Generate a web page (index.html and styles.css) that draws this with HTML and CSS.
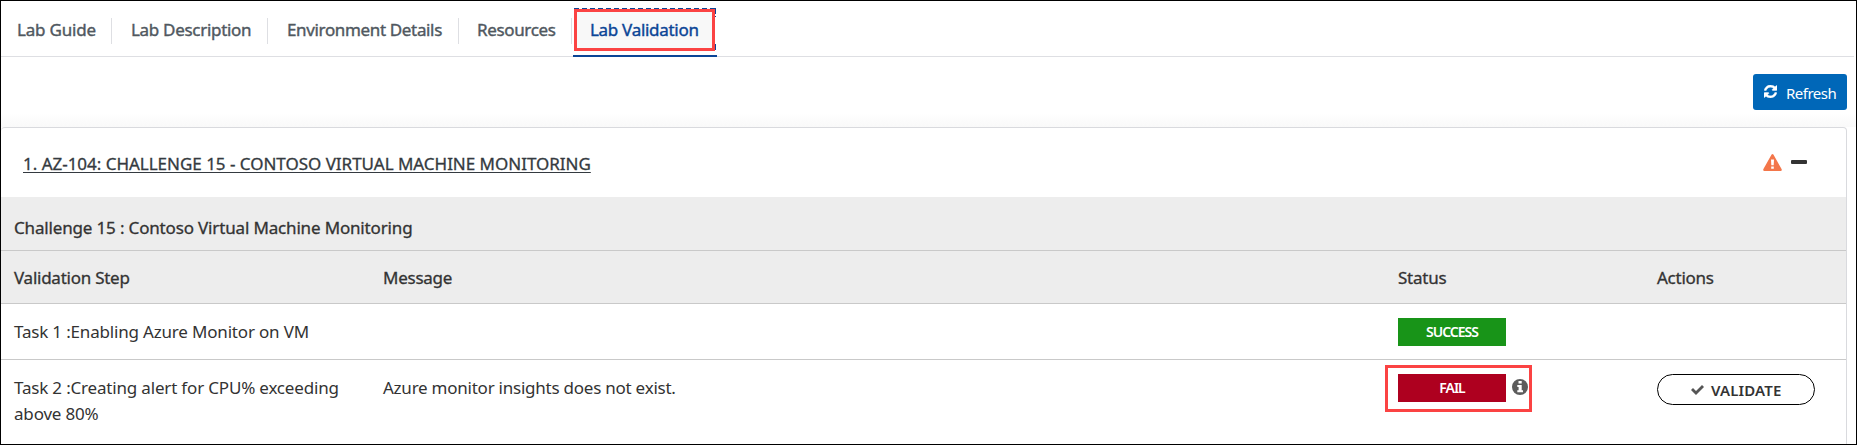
FILE: index.html
```html
<!DOCTYPE html>
<html lang="en">
<head>
<meta charset="utf-8">
<title>Lab Validation</title>
<link rel="stylesheet" href="styles.css">
</head>
<body>
<div class="page">
  <nav class="tabs">
    <a class="tab tab-guide"><span>Lab Guide</span></a>
    <a class="tab tab-description"><span>Lab Description</span></a>
    <a class="tab tab-environment"><span>Environment Details</span></a>
    <a class="tab tab-resources"><span>Resources</span></a>
    <a class="tab tab-validation active"><span>Lab Validation</span><i class="highlight"></i></a>
  </nav>
  <div class="toolbar">
    <button class="refresh">
      <svg class="refresh-icon" viewBox="0 0 1536 1536"><path fill="currentColor" stroke="currentColor" stroke-width="50" d="M1511 928q0 5-1 7-64 268-268 434.500T764 1536q-146 0-282.500-55T238 1324l-129 129q-19 19-45 19t-45-19-19-45V960q0-26 19-45t45-19h448q26 0 45 19t19 45-19 45l-137 137q71 66 161 102t187 36q134 0 250-65t186-179q11-17 53-117 8-23 30-23h192q13 0 22.500 9.500t9.500 22.500zm25-800v448q0 26-19 45t-45 19h-448q-26 0-45-19t-19-45 19-45l138-138Q969 256 768 256q-134 0-250 65T332 500q-11 17-53 117-8 23-30 23H50q-13 0-22.500-9.500T18 608v-7q65-268 270-434.500T768 0q146 0 284 55.500T1297 212l130-129q19-19 45-19t45 19 19 45z"/></svg>
      <span>Refresh</span>
    </button>
  </div>
  <section class="card">
    <header class="card-head">
      <a class="card-title">1. AZ-104: CHALLENGE 15 - CONTOSO VIRTUAL MACHINE MONITORING</a>
      <div class="card-icons">
        <svg class="warning-icon" viewBox="0 0 19 17"><path fill="#f3764a" fill-rule="evenodd" d="M8.600.6Q9.500-.5 10.400.6L18.700 15.300Q19 17 17.700 17H1.300Q0 17 .3 15.300ZM8 5.500L8.300 11.300H10.700L11 5.500ZM8.200 12.500V14.800H10.800V12.500Z"/></svg>
        <i class="minus-icon"></i>
      </div>
    </header>
    <div class="group">Challenge 15 : Contoso Virtual Machine Monitoring</div>
    <div class="row head">
      <div class="h-step">Validation Step</div><div class="h-message">Message</div><div class="h-status">Status</div><div class="h-actions">Actions</div>
    </div>
    <div class="row">
      <div class="task task-one">Task 1 :Enabling Azure Monitor on VM</div>
      <div></div>
      <div><span class="badge success">SUCCESS</span></div>
      <div></div>
    </div>
    <div class="row last">
      <div class="task task-two">Task 2 :Creating alert for CPU% exceeding<br>above 80%</div>
      <div class="message">Azure monitor insights does not exist.</div>
      <div class="status">
        <span class="badge fail">FAIL</span>
        <svg class="info-icon" viewBox="0 0 16 16"><circle cx="8" cy="8" r="8" fill="#5c5c5c"/><path fill="#fff" d="M6.500 2H9.700V4.500H6.500ZM5.300 6H9.700V11.300H11V13.300H5.300V11.300H6.600V8H5.300Z"/></svg>
        <i class="highlight"></i>
      </div>
      <div><button class="validate">
        <svg class="check-icon" viewBox="0 0 13 10"><path fill="#555" d="M0 5L2 3L5 6L11 0L13 2L5 10Z"/></svg>
        <span>VALIDATE</span>
      </button></div>
    </div>
  </section>
</div>
</body>
</html>
```
FILE: styles.css
```css
* { box-sizing: border-box; }

body {
  margin: 0;
  overflow: hidden;
  background: #fff;
  color: #333;
  font-family: "Noto Sans", "Open Sans", sans-serif;
}

.page {
  width: 1857px;
  height: 445px;
  overflow: hidden;
  border: 1px solid #000;
}

.tabs {
  display: flex;
  width: 1853px;
  height: 56px;
  border-bottom: 1px solid #dedfe3;
  color: #505860;
  font-size: 17px;
  line-height: 24px;
}

.tab {
  position: relative;
  flex: none;
  height: 56px;
  padding: 17px 0 0 19px;
  white-space: nowrap;
  -webkit-text-stroke: 0.4px currentColor;
}

.tab:not(.active)::after {
  content: "";
  position: absolute;
  top: 17px;
  right: 0;
  width: 1px;
  height: 26px;
  background: #dedfe3;
}

.tab-guide { width: 111px; padding-left: 16px; letter-spacing: -0.2px; }
.tab-description { width: 156px; letter-spacing: -0.3px; }
.tab-environment { width: 191px; letter-spacing: -0.35px; }
.tab-resources { width: 113px; padding-left: 18px; letter-spacing: -0.35px; }

.tab-validation {
  width: 144px;
  margin-left: 1px;
  padding-left: 17px;
  border-bottom: 2px solid #0b4596;
  color: #0b4596;
  letter-spacing: -0.3px;
  background: linear-gradient(#f8f8f8, #f8f8f8) 1px 7px / 141px 42px no-repeat;
}

.tab-validation::before {
  content: "";
  position: absolute;
  top: 7px;
  left: 1px;
  width: 142px;
  height: 42px;
  background:
    repeating-linear-gradient(90deg, #0b4596 0 5px, transparent 5px 8px) 0 0 / 100% 1px no-repeat,
    linear-gradient(#0b4596, #0b4596) 100% 0 / 1px 6px no-repeat,
    linear-gradient(#0b4596, #0b4596) 100% 8px / 1px 1px no-repeat,
    linear-gradient(#0b4596, #0b4596) 100% 100% / 1px 6px no-repeat;
}

.highlight {
  position: absolute;
  border: 3px solid #fb4343;
}

.tab .highlight { top: 8px; left: 1px; width: 141px; height: 42px; }
.tab span { position: relative; }

.toolbar {
  display: flex;
  justify-content: flex-end;
  height: 70px;
  padding: 17px 9px 0 0;
  background: linear-gradient(#fff 80%, #f9f9f9);
}

.refresh {
  display: flex;
  align-items: center;
  gap: 9px;
  width: 94px;
  height: 36px;
  padding: 2px 0 0 11px;
  border: 0;
  border-radius: 3px;
  background: #0067b8;
  color: #fff;
  font: 15px/22px "Noto Sans", sans-serif;
  letter-spacing: -0.5px;
}

.refresh-icon { width: 13px; height: 13px; margin-top: -4px; }

.card {
  width: 1846px;
  height: 330px;
  border: 1px solid #d9dade;
  border-left: 0;
  border-radius: 4px 4px 0 0;
}

.card-head {
  display: flex;
  justify-content: space-between;
  height: 69px;
  padding: 24px 39px 0 22px;
}

.card-title {
  height: 24px;
  color: #343a40;
  font-size: 17px;
  line-height: 24px;
  letter-spacing: -0.02px;
  white-space: nowrap;
  text-decoration: underline;
  text-decoration-thickness: 1px;
  text-underline-offset: 2px;
  text-decoration-skip-ink: none;
  -webkit-text-stroke: 0.3px currentColor;
}

.card-icons { display: flex; gap: 9px; }
.warning-icon { width: 19px; height: 17px; margin-top: 2px; }
.minus-icon { width: 16px; height: 4px; margin-top: 8px; background: #333; border-radius: 1px; }

.group {
  height: 54px;
  padding: 19px 13px 0;
  border-bottom: 1px solid #c9c9c9;
  background: #ededed;
  font-size: 17px;
  line-height: 24px;
  letter-spacing: -0.16px;
  -webkit-text-stroke: 0.3px currentColor;
}

.row {
  display: grid;
  grid-template-columns: 369px 1015px 259px 1fr;
  height: 56px;
  padding: 14px 0 0 13px;
  border-bottom: 1px solid #c9c9c9;
  font-size: 17px;
  line-height: 26px;
  white-space: nowrap;
}

.head {
  height: 53px;
  background: #ededed;
  letter-spacing: -0.25px;
  -webkit-text-stroke: 0.3px currentColor;
}

.last { height: 85px; border: 0; }
.task, .message { margin-top: 1px; letter-spacing: -0.18px; }
.message { letter-spacing: -0.24px; }
.status { position: relative; display: flex; align-items: flex-start; gap: 6px; }
.status .highlight { top: -9px; left: -13px; width: 147px; height: 47px; }

.badge {
  display: block;
  width: 108px;
  height: 28px;
  color: #fff;
  font-size: 14px;
  font-weight: 600;
  line-height: 28px;
  letter-spacing: -1px;
  text-align: center;
}

.success { background: #189418; }
.fail { background: #ae001f; }
.info-icon { width: 16px; height: 16px; margin-top: 5px; }

.validate {
  display: flex;
  align-items: center;
  gap: 7px;
  width: 158px;
  height: 31px;
  padding: 1px 0 0 33px;
  border: 1px solid #000;
  border-radius: 16px;
  background: #fff;
  color: #333;
  font: 600 15px/22px "Noto Sans", sans-serif;
  letter-spacing: 0.15px;
}

.check-icon { width: 13px; height: 10px; }
```
